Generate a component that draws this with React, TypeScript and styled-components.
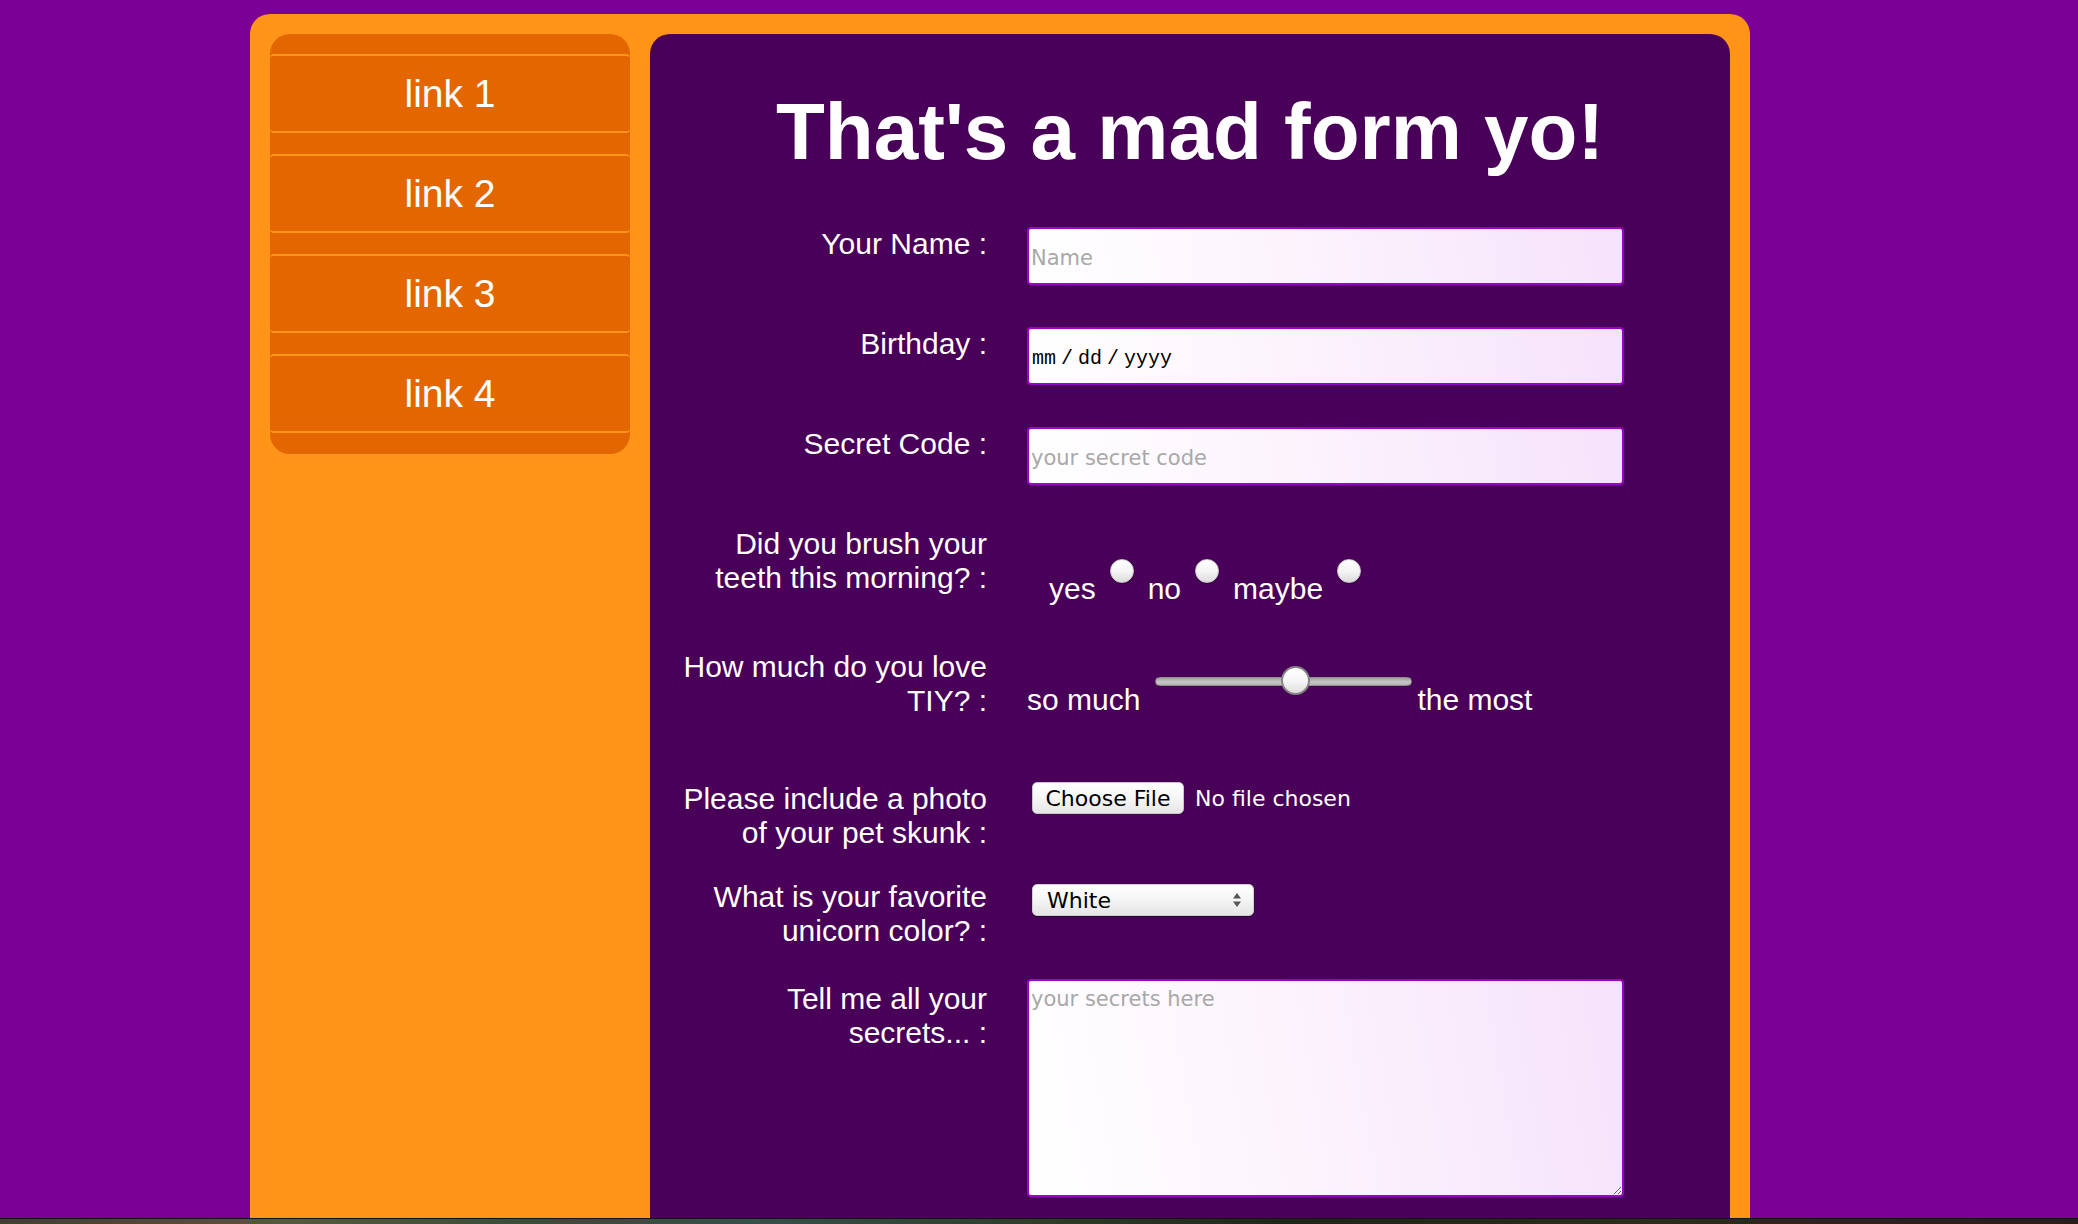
import styled, { createGlobalStyle } from 'styled-components';

const GlobalStyle = createGlobalStyle`
  html, body {
    margin: 0;
    padding: 0;
    background: #7b0096;
  }
  body {
    font-family: "Liberation Sans", Arial, Helvetica, sans-serif;
  }
  * {
    box-sizing: border-box;
  }
`;

const Viewport = styled.div`
  height: 1218px;
  overflow: hidden;
`;

// the strip of desktop that shows under the browser window
const DesktopStrip = styled.div`
  height: 6px;
  border-top: 1px solid #141414;
  background: linear-gradient(
    90deg,
    #3b4328 0%,
    #58583a 14%,
    #3e4a34 26%,
    #36504a 36%,
    #2f3d2a 50%,
    #1e2618 62%,
    #2c2c1a 80%,
    #222214 100%
  );
`;

const Frame = styled.div`
  display: flex;
  align-items: flex-start;
  gap: 20px;
  width: 1500px;
  margin: 14px 0 0 250px;
  padding: 20px;
  background: #ff9418;
  border-radius: 20px;
`;

const Nav = styled.ul`
  display: flex;
  flex-direction: column;
  gap: 21px;
  flex: 0 0 360px;
  margin: 0;
  padding: 20px 0 21px;
  list-style: none;
  background: #e46600;
  border-radius: 20px;
`;

const NavItem = styled.li`
  height: 79px;
  border-top: 2px solid #ff9418;
  border-bottom: 2px solid #ff9418;
  border-radius: 4px;
  text-align: center;
`;

const NavLink = styled.a`
  display: block;
  line-height: 75px;
  font-size: 39px;
  color: #fff;
  text-decoration: none;
`;

const Panel = styled.main`
  flex: 0 0 1080px;
  padding: 52px 0 90px;
  background: #490058;
  border-radius: 20px;
`;

const Title = styled.h1`
  margin: 0 0 49px;
  font-size: 80px;
  line-height: 92px;
  font-weight: 700;
  color: #fff;
  text-align: center;
`;

const Row = styled.div<{ $space: number }>`
  display: grid;
  grid-template-columns: 315px 597px;
  column-gap: 40px;
  align-items: start;
  padding-left: 22px;
  margin-bottom: ${p => p.$space}px;
`;

const Label = styled.label<{ $top?: number }>`
  padding-top: ${p => p.$top ?? 0}px;
  font-size: 30px;
  line-height: 34px;
  color: #fff;
  text-align: right;
`;

const fieldSkin = `
  width: 597px;
  border: 2px solid #9b00c9;
  border-radius: 4px;
  background: linear-gradient(80deg, #ffffff 0%, #fcf3fd 45%, #f6e2fb 100%);
  outline: none;
`;

const TextInput = styled.input`
  ${fieldSkin}
  height: 58px;
  padding: 4px 2px 0;
  font-family: "DejaVu Sans", "Liberation Sans", sans-serif;
  font-size: 21px;
  color: #222;

  &::placeholder {
    color: #a8a8a8;
  }
`;

const DateInput = styled.input`
  ${fieldSkin}
  height: 58px;
  padding: 5px 3px 0;
  font-family: "Liberation Mono", "Courier New", monospace;
  font-size: 20px;
  color: #000;

  &::-webkit-calendar-picker-indicator {
    display: none;
  }
  &::-webkit-datetime-edit-text {
    padding: 0 5px;
  }
  &::-webkit-datetime-edit-fields-wrapper {
    padding: 0;
  }
  &::-webkit-datetime-edit-month-field,
  &::-webkit-datetime-edit-day-field,
  &::-webkit-datetime-edit-year-field {
    padding: 0;
    color: #000;
  }
`;

const TextArea = styled.textarea`
  ${fieldSkin}
  display: block;
  height: 218px;
  padding: 6px 2px 4px;
  font-family: "DejaVu Sans", "Liberation Sans", sans-serif;
  font-size: 21px;
  color: #222;

  &::placeholder {
    color: #a8a8a8;
  }
`;

const RadioGroup = styled.div`
  display: flex;
  gap: 14px;
  padding: 32px 0 0 22px;
`;

const Choice = styled.label`
  display: flex;
  align-items: flex-start;
  gap: 14px;
`;

const InlineText = styled.span<{ $top: number }>`
  margin-top: ${p => p.$top}px;
  font-size: 30px;
  line-height: 34px;
  color: #fff;
  white-space: nowrap;
`;

const Radio = styled.input`
  appearance: none;
  flex: 0 0 24px;
  width: 24px;
  height: 24px;
  margin: 0;
  border: 1px solid #c9c9c9;
  border-radius: 50%;
  background: linear-gradient(180deg, #ffffff 0%, #f4f4f4 50%, #dcdcdc 100%);
  box-shadow: inset 0 1px 1px rgba(255, 255, 255, 0.9), 0 1px 1px rgba(0, 0, 0, 0.25);
`;

const SliderField = styled.div`
  display: flex;
  align-items: flex-start;
  padding-top: 17px;
`;

const Range = styled.input`
  appearance: none;
  width: 257px;
  height: 29px;
  margin: 0 5px 0 15px;
  background: transparent;

  &::-webkit-slider-runnable-track {
    height: 9px;
    border: 1px solid #8f8f8f;
    border-radius: 5px;
    background: linear-gradient(180deg, #9d9d9d 0%, #c8c8c8 55%, #b5b5b5 100%);
  }
  &::-webkit-slider-thumb {
    appearance: none;
    width: 29px;
    height: 29px;
    margin-top: -12px;
    border: 2px solid #858585;
    border-radius: 50%;
    background: linear-gradient(180deg, #ffffff 0%, #f6f6f6 50%, #dedede 100%);
  }
`;

const FileInput = styled.input`
  width: 420px;
  height: 32px;
  margin-left: 5px;
  font-family: "DejaVu Sans", "Liberation Sans", sans-serif;
  font-size: 22px;
  line-height: 32px;
  color: #fff;

  &::file-selector-button {
    width: 152px;
    height: 32px;
    margin: 0 11px 0 0;
    padding: 0;
    border: 1px solid #c6c6c6;
    border-radius: 5px;
    background: linear-gradient(180deg, #ffffff 0%, #f7f7f7 45%, #e6e6e6 100%);
    box-shadow: 0 1px 1px rgba(0, 0, 0, 0.35);
    font-family: "DejaVu Sans", "Liberation Sans", sans-serif;
    font-size: 22px;
    color: #000;
  }
`;

const SelectField = styled.div`
  padding: 4px 0 0 5px;
`;

const SelectWrap = styled.div`
  position: relative;
  width: 222px;
`;

const Select = styled.select`
  appearance: none;
  display: block;
  width: 222px;
  height: 32px;
  padding: 0 14px;
  border: 1px solid #d0d0d0;
  border-radius: 5px;
  background: linear-gradient(180deg, #ffffff 0%, #f6f6f6 45%, #e4e4e4 100%);
  box-shadow: 0 1px 1px rgba(0, 0, 0, 0.4);
  font-family: "DejaVu Sans", "Liberation Sans", sans-serif;
  font-size: 22px;
  color: #000;
  outline: none;
`;

const SelectArrows = styled.svg`
  position: absolute;
  top: 8px;
  right: 12px;
  pointer-events: none;
`;

export default function App() {
  const links = ['link 1', 'link 2', 'link 3', 'link 4'];

  return (
    <>
      <GlobalStyle />
      <Viewport>
        <Frame>
          <Nav>
            {links.map(link => (
              <NavItem key={link}>
                <NavLink href="#">{link}</NavLink>
              </NavItem>
            ))}
          </Nav>

          <Panel>
            <Title>That's a mad form yo!</Title>
            <form onSubmit={e => e.preventDefault()}>
              <Row $space={42}>
                <Label htmlFor="name">Your Name :</Label>
                <TextInput id="name" type="text" placeholder="Name" />
              </Row>

              <Row $space={42}>
                <Label htmlFor="birthday">Birthday :</Label>
                <DateInput id="birthday" type="date" />
              </Row>

              <Row $space={42}>
                <Label htmlFor="secret">Secret Code :</Label>
                <TextInput id="secret" type="password" placeholder="your secret code" />
              </Row>

              <Row $space={44}>
                <Label>Did you brush your teeth this morning? :</Label>
                <RadioGroup>
                  {['yes', 'no', 'maybe'].map(answer => (
                    <Choice key={answer}>
                      <InlineText $top={13}>{answer}</InlineText>
                      <Radio type="radio" name="teeth" value={answer} />
                    </Choice>
                  ))}
                </RadioGroup>
              </Row>

              <Row $space={64}>
                <Label htmlFor="love">How much do you love TIY? :</Label>
                <SliderField>
                  <InlineText $top={16}>so much</InlineText>
                  <Range id="love" type="range" min={0} max={100} defaultValue={55} />
                  <InlineText $top={16}>the most</InlineText>
                </SliderField>
              </Row>

              <Row $space={30}>
                <Label htmlFor="skunk">Please include a photo of your pet skunk :</Label>
                <div>
                  <FileInput id="skunk" type="file" />
                </div>
              </Row>

              <Row $space={31}>
                <Label htmlFor="unicorn">What is your favorite unicorn color? :</Label>
                <SelectField>
                  <SelectWrap>
                    <Select id="unicorn" defaultValue="white">
                      <option value="white">White</option>
                      <option value="pink">Pink</option>
                      <option value="rainbow">Rainbow</option>
                    </Select>
                    <SelectArrows width="10" height="16" viewBox="0 0 10 16">
                      <path d="M5 1 L9 6.5 L1 6.5 Z" fill="#555" />
                      <path d="M5 15 L9 9.5 L1 9.5 Z" fill="#555" />
                    </SelectArrows>
                  </SelectWrap>
                </SelectField>
              </Row>

              <Row $space={0}>
                <Label htmlFor="secrets" $top={3}>Tell me all your secrets... :</Label>
                <TextArea id="secrets" placeholder="your secrets here" />
              </Row>
            </form>
          </Panel>
        </Frame>
      </Viewport>
      <DesktopStrip />
    </>
  );
}
